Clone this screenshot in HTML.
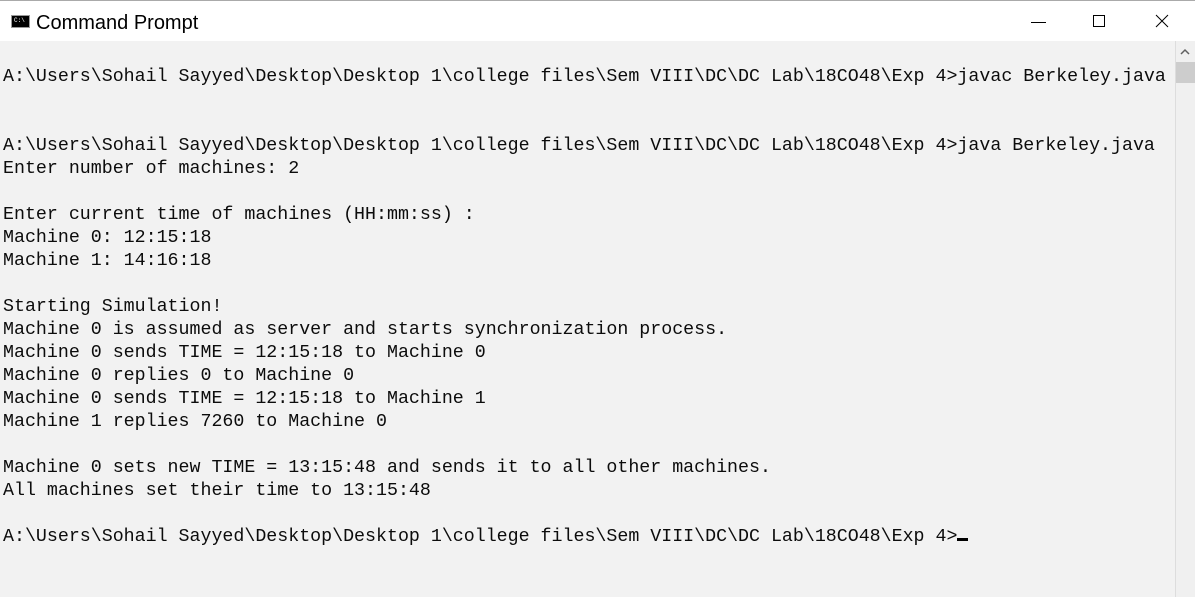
<!DOCTYPE html>
<html><head><style>
html,body{margin:0;padding:0;width:1195px;height:597px;overflow:hidden;background:#f2f2f2;}
.title{position:absolute;left:0;top:0;width:1195px;height:41px;background:#fff;border-top:1px solid #aaa;box-sizing:border-box;}
.title .t{position:absolute;left:36px;top:11px;font:20px "Liberation Sans",sans-serif;color:#000;}
.icon{position:absolute;left:11px;top:14px;width:19px;height:13px;background:#000;border:1px solid #999;box-sizing:border-box;}
.icon span{position:absolute;left:2px;top:1px;font:6px "Liberation Mono",monospace;color:#fff;}
pre{position:absolute;left:3px;top:66px;margin:0;font:18.3px/23px "Liberation Mono",monospace;color:#0c0c0c;}
.sb{position:absolute;left:1175px;top:41px;width:20px;height:556px;background:#f0f0f0;border-left:1px solid #ddd;}
.thumb{position:absolute;left:1176px;top:62px;width:19px;height:21px;background:#cdcdcd;}
.cur{display:inline-block;width:11px;height:3px;background:#000;vertical-align:baseline;}
</style></head><body>
<div class="title"><div class="icon"><span>C:\</span></div><div class="t">Command Prompt</div>
<svg style="position:absolute;left:1030px;top:12px" width="20" height="20"><path d="M1 9.5H16" stroke="#000" stroke-width="1"/></svg>
<svg style="position:absolute;left:1092px;top:13px" width="16" height="16"><rect x="1.5" y="1.5" width="11" height="11" fill="none" stroke="#000"/></svg>
<svg style="position:absolute;left:1155px;top:13px" width="16" height="16"><path d="M1 1L13 13M13 1L1 13" stroke="#000"/></svg>
</div>
<div class="sb"></div>
<svg style="position:absolute;left:1179px;top:47px" width="12" height="10"><path d="M2 7L6 3L10 7" fill="none" stroke="#606060" stroke-width="1.5"/></svg>
<div class="thumb"></div>
<pre>A:\Users\Sohail Sayyed\Desktop\Desktop 1\college files\Sem VIII\DC\DC Lab\18CO48\Exp 4>javac Berkeley.java


A:\Users\Sohail Sayyed\Desktop\Desktop 1\college files\Sem VIII\DC\DC Lab\18CO48\Exp 4>java Berkeley.java
Enter number of machines: 2

Enter current time of machines (HH:mm:ss) :
Machine 0: 12:15:18
Machine 1: 14:16:18

Starting Simulation!
Machine 0 is assumed as server and starts synchronization process.
Machine 0 sends TIME = 12:15:18 to Machine 0
Machine 0 replies 0 to Machine 0
Machine 0 sends TIME = 12:15:18 to Machine 1
Machine 1 replies 7260 to Machine 0

Machine 0 sets new TIME = 13:15:48 and sends it to all other machines.
All machines set their time to 13:15:48

A:\Users\Sohail Sayyed\Desktop\Desktop 1\college files\Sem VIII\DC\DC Lab\18CO48\Exp 4><span class="cur"></span></pre>
</body></html>
